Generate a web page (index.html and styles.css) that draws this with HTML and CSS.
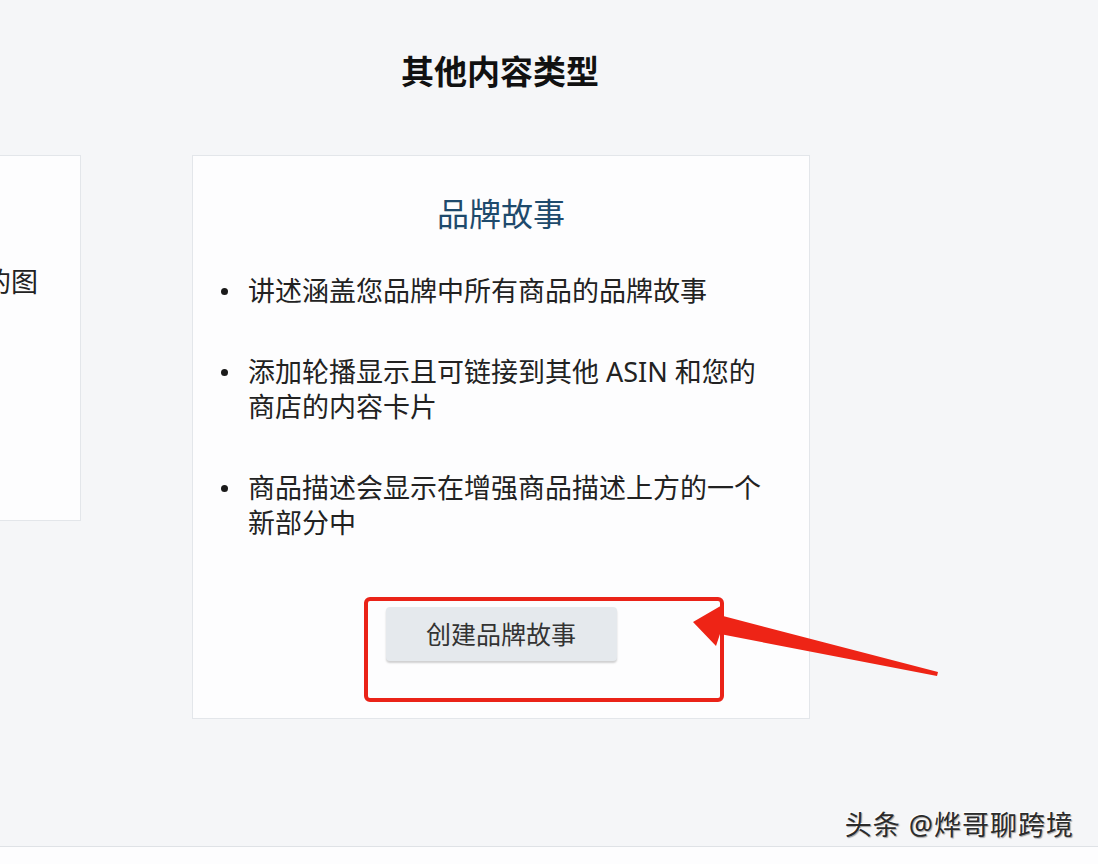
FILE: index.html
```html
<!DOCTYPE html>
<html lang="zh-CN">
<head>
<meta charset="utf-8">
<title>其他内容类型</title>
<link rel="stylesheet" href="styles.css">
</head>
<body>
<div class="page">
  <h1 class="page-title">其他内容类型</h1>
  <div class="cards">
    <div class="card card-side">
      <div class="side-text"><span>片添加到您商品的图</span></div>
    </div>
    <div class="card card-main">
      <h2 class="card-title">品牌故事</h2>
      <ul class="features">
        <li><span class="dot"></span><span class="feat-text">讲述涵盖您品牌中所有商品的品牌故事</span></li>
        <li><span class="dot"></span><span class="feat-text">添加轮播显示且可链接到其他 ASIN 和您的商店的内容卡片</span></li>
        <li><span class="dot"></span><span class="feat-text">商品描述会显示在增强商品描述上方的一个新部分中</span></li>
      </ul>
      <div class="cta">
        <button class="btn">创建品牌故事</button>
      </div>
    </div>
  </div>
</div>
<div class="footer"></div>

<svg class="annotation" width="1098" height="864" viewBox="0 0 1098 864" xmlns="http://www.w3.org/2000/svg">
  <rect x="366" y="599" width="356" height="101" rx="4" ry="4" fill="none" stroke="#ea2318" stroke-width="4"/>
  <polygon points="693,622 724,604 723,616 938,672 937,676 720,634 716,646" fill="#ee2416"/>
</svg>

<div class="watermark">头条 @烨哥聊跨境</div>
</body>
</html>
```

FILE: styles.css
```css
* { box-sizing: border-box; }

html, body {
  margin: 0;
  padding: 0;
}

body {
  width: 1098px;
  height: 864px;
  overflow: hidden;
  position: relative;
  background: #f5f6f8;
  font-family: "Noto Sans", "Noto Sans CJK SC", sans-serif;
  color: #222;
}

.page {
  height: 846px;
  padding-top: 50px;
  background: #f5f6f8;
}

.page-title {
  margin: 0;
  text-align: center;
  font-size: 33px;
  line-height: 44px;
  font-weight: 700;
  color: #111;
  padding-right: 98px;
}

.cards {
  margin-top: 61px;
  display: flex;
  align-items: flex-start;
  gap: 111px;
}

.card {
  background: #fdfdfe;
  border: 1px solid #e3e6ea;
}

.card-side {
  width: 81px;
  height: 366px;
  border-left: none;
  overflow: hidden;
  padding-top: 108px;
}

.side-text {
  display: flex;
  justify-content: flex-end;
  padding-right: 42px;
  font-size: 27px;
  line-height: 35px;
  color: #222;
}

.side-text span {
  white-space: nowrap;
  flex-shrink: 0;
}

.card-main {
  width: 618px;
  height: 564px;
  padding: 38px 40px 0 0;
}

.card-title {
  margin: 0;
  text-align: center;
  font-size: 32px;
  line-height: 40px;
  font-weight: 400;
  color: #1e4a6c;
  padding-left: 40px;
}

.features {
  list-style: none;
  margin: 39px 0 0 0;
  padding: 0;
}

.features li {
  display: flex;
  align-items: flex-start;
  font-size: 27px;
  line-height: 35px;
  color: #222;
}

.features li + li {
  margin-top: 46px;
}

.dot {
  flex-shrink: 0;
  width: 7px;
  height: 7px;
  border-radius: 50%;
  background: #1a1a1a;
  margin: 15px 20px 0 28px;
}

.feat-text {
  flex: 1;
}

.cta {
  display: flex;
  justify-content: center;
  margin-top: 67px;
  padding-left: 40px;
}

.btn {
  width: 231px;
  height: 54px;
  border: none;
  border-radius: 4px;
  background: #e5e9ed;
  box-shadow: 0 2px 2px rgba(0, 0, 0, 0.18);
  font-family: "Noto Sans", "Noto Sans CJK SC", sans-serif;
  font-size: 25px;
  color: #333;
  padding: 0;
  line-height: 50px;
}

.footer {
  height: 18px;
  border-top: 1px solid #dfe2e6;
  background: #fdfdfe;
}

.annotation {
  position: absolute;
  left: 0;
  top: 0;
  pointer-events: none;
}

.watermark {
  position: absolute;
  right: 24px;
  top: 807px;
  font-size: 27px;
  line-height: 36px;
  letter-spacing: 1px;
  color: #2b2b2b;
  text-shadow: -1px -1px 0 #fff, 1px 1px 1px rgba(0,0,0,0.35);
  white-space: nowrap;
}
```
